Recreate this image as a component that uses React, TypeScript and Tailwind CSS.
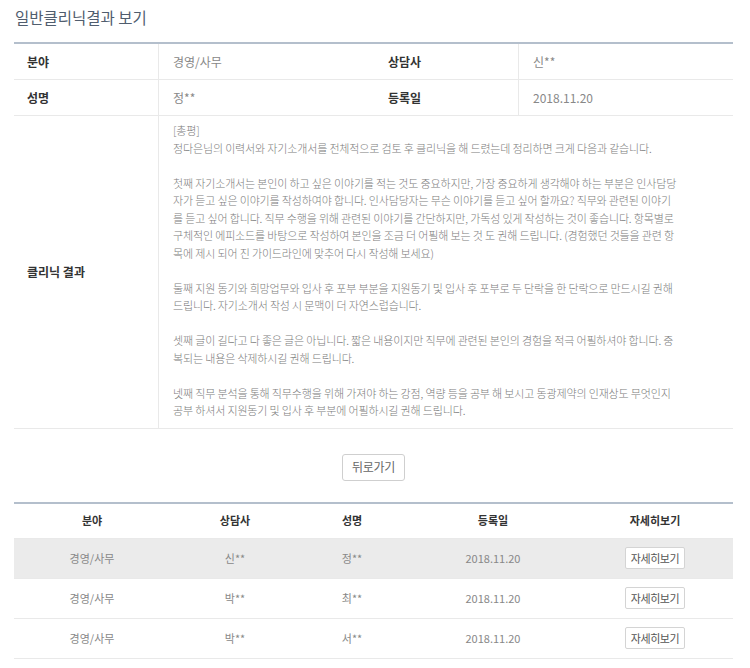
const review = [
  '[총평]',
  '정다은님의 이력서와 자기소개서를 전체적으로 검토 후 클리닉을 해 드렸는데 정리하면 크게 다음과 같습니다.',
  '',
  '첫째 자기소개서는 본인이 하고 싶은 이야기를 적는 것도 중요하지만, 가장 중요하게 생각해야 하는 부분은 인사담당',
  '자가 듣고 싶은 이야기를 작성하여야 합니다. 인사담당자는 무슨 이야기를 듣고 싶어 할까요? 직무와 관련된 이야기',
  '를 듣고 싶어 합니다. 직무 수행을 위해 관련된 이야기를 간단하지만, 가독성 있게 작성하는 것이 좋습니다. 항목별로',
  '구체적인 에피소드를 바탕으로 작성하여 본인을 조금 더 어필해 보는 것 도 권해 드립니다. (경험했던 것들을 관련 항',
  '목에 제시 되어 진 가이드라인에 맞추어 다시 작성해 보세요)',
  '',
  '둘째 지원 동기와 희망업무와 입사 후 포부 부분을 지원동기 및 입사 후 포부로 두 단락을 한 단락으로 만드시길 권해',
  '드립니다. 자기소개서 작성 시 문맥이 더 자연스럽습니다.',
  '',
  '셋째 글이 길다고 다 좋은 글은 아닙니다. 짧은 내용이지만 직무에 관련된 본인의 경험을 적극 어필하셔야 합니다. 중',
  '복되는 내용은 삭제하시길 권해 드립니다.',
  '',
  '넷째 직무 분석을 통해 직무수행을 위해 가져야 하는 강점, 역량 등을 공부 해 보시고 동광제약의 인재상도 무엇인지',
  '공부 하셔서 지원동기 및 입사 후 부분에 어필하시길 권해 드립니다.',
];

const history = [
  { field: '경영/사무', counselor: '신**', name: '정**', date: '2018.11.20', active: true },
  { field: '경영/사무', counselor: '박**', name: '최**', date: '2018.11.20', active: false },
  { field: '경영/사무', counselor: '박**', name: '서**', date: '2018.11.20', active: false },
];

// column widths picked so each column's centre sits where the reference has it
const cols = 'grid grid-cols-[156px_130px_104px_178px_146px_1fr]';

const App = () => {
  return (
    <div className="min-h-screen bg-white font-['Noto_Sans_CJK_KR','Noto_Sans',sans-serif]">
      <div className="w-[719px] ml-[14px] pt-[6px]">
        {/* Title */}
        <h1 className="text-[15.5px] leading-[22px] text-[#505d6e] pl-px">일반클리닉결과 보기</h1>

        {/* Result table */}
        <div className="mt-[14px] border-t-2 border-[#b4bfcc]">
          <div className="grid grid-cols-[145px_216px_144px_214px] text-[12px]">
            <div className="h-[36px] flex items-center px-[13px] font-bold text-[#333] border-r border-b border-[#e9e9e9]">분야</div>
            <div className="h-[36px] flex items-center px-[14px] text-[#888] border-b border-[#e9e9e9]">경영/사무</div>
            <div className="h-[36px] flex items-center px-[13px] font-bold text-[#333] border-r border-b border-[#e9e9e9]">상담사</div>
            <div className="h-[36px] flex items-center px-[14px] text-[#888] border-b border-[#e9e9e9]">신**</div>

            <div className="h-[36px] flex items-center px-[13px] font-bold text-[#333] border-r border-b border-[#e9e9e9]">성명</div>
            <div className="h-[36px] flex items-center px-[14px] text-[#888] border-b border-[#e9e9e9]">정**</div>
            <div className="h-[36px] flex items-center px-[13px] font-bold text-[#333] border-r border-b border-[#e9e9e9]">등록일</div>
            <div className="h-[36px] flex items-center px-[14px] text-[#888] border-b border-[#e9e9e9]">2018.11.20</div>

            <div className="flex items-center px-[13px] font-bold text-[#333] border-r border-b border-[#e9e9e9]">클리닉 결과</div>
            <div className="col-span-3 px-[14px] pt-[6px] pb-[8px] text-[11px] leading-[17.5px] tracking-[-0.15px] font-light text-[#7c7c7c] border-b border-[#e9e9e9]">
              {review.map((line, i) =>
                line ? (
                  <div key={i} className="whitespace-pre">{line}</div>
                ) : (
                  <div key={i} className="h-[17.5px]" />
                )
              )}
            </div>
          </div>
        </div>

        {/* Back button */}
        <div className="flex justify-center pt-[25px] pb-[21px]">
          <button className="h-[27px] px-[9px] border border-[#cfcfcf] rounded-[3px] bg-white text-[12px] text-[#666] tracking-[-0.3px]">
            뒤로가기
          </button>
        </div>

        {/* History table */}
        <div className="border-t-2 border-[#b4bfcc] text-[11px]">
          <div className={`${cols} h-[35px] items-center text-center font-bold text-[#333] border-b border-[#e9e9e9]`}>
            <div>분야</div>
            <div>상담사</div>
            <div>성명</div>
            <div>등록일</div>
            <div>자세히보기</div>
            <div />
          </div>
          {history.map((row, i) => (
            <div
              key={i}
              className={`${cols} h-[40px] items-center text-center text-[#888] border-b border-[#e9e9e9] ${row.active ? 'bg-[#ebebeb]' : 'bg-white'}`}
            >
              <div>{row.field}</div>
              <div>{row.counselor}</div>
              <div>{row.name}</div>
              <div>{row.date}</div>
              <div className="flex justify-center">
                <button className="h-[22px] px-[5px] border border-[#d4d4d4] rounded-[2px] bg-white text-[11px] text-[#555] tracking-[-0.4px]">
                  자세히보기
                </button>
              </div>
              <div />
            </div>
          ))}
        </div>
      </div>
    </div>
  );
};

export default App;
